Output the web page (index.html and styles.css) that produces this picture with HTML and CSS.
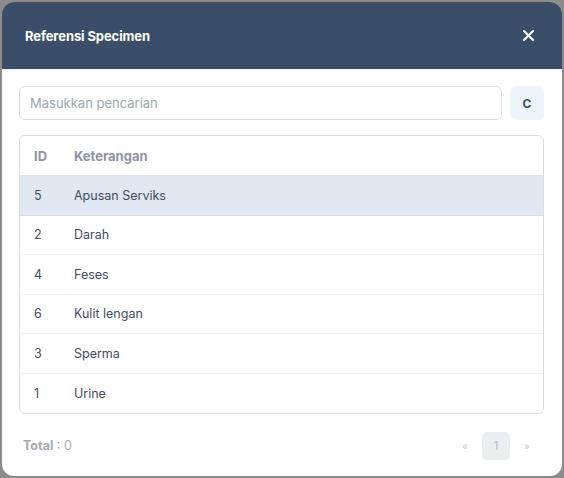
FILE: index.html
```html
<!DOCTYPE html>
<html lang="id">
<head>
<meta charset="utf-8">
<title>Referensi Specimen</title>
<link rel="stylesheet" href="styles.css">
</head>
<body>
<div class="modal">
  <div class="modal-header">
    <h2 class="modal-title">Referensi Specimen</h2>
    <button class="close-btn" aria-label="Tutup">
      <svg width="11" height="11" viewBox="0 0 11 11"><path d="M1 1 L10 10 M10 1 L1 10" stroke="#fff" stroke-width="2" stroke-linecap="round"/></svg>
    </button>
  </div>
  <div class="modal-body">
    <div class="search-row">
      <input class="search-input" type="text" placeholder="Masukkan pencarian">
      <button class="clear-btn">C</button>
    </div>
    <div class="table-wrap">
      <div class="row head"><span class="c-id">ID</span><span class="c-ket">Keterangan</span></div>
      <div class="row active"><span class="c-id">5</span><span class="c-ket">Apusan Serviks</span></div>
      <div class="row"><span class="c-id">2</span><span class="c-ket">Darah</span></div>
      <div class="row"><span class="c-id">4</span><span class="c-ket">Feses</span></div>
      <div class="row"><span class="c-id">6</span><span class="c-ket">Kulit lengan</span></div>
      <div class="row"><span class="c-id">3</span><span class="c-ket">Sperma</span></div>
      <div class="row last"><span class="c-id">1</span><span class="c-ket">Urine</span></div>
    </div>
    <div class="footer">
      <div class="total"><b>Total</b> : 0</div>
      <div class="pager">
        <span class="arrow">«</span>
        <span class="page">1</span>
        <span class="arrow">»</span>
      </div>
    </div>
  </div>
</div>
</body>
</html>
```
FILE: styles.css
```css
* { box-sizing: border-box; }
html, body { margin: 0; padding: 0; }
body {
  background: #8c8c8c;
  font-family: Inter, "Open Sans", sans-serif;
  width: 564px;
  height: 478px;
  padding: 2px;
}
.modal {
  width: 560px;
  height: 474px;
  background: #fff;
  border-radius: 12px;
  overflow: hidden;
}
.modal-header {
  height: 67px;
  background: #3b4e69;
  display: flex;
  align-items: center;
  justify-content: space-between;
  padding: 0 28px 0 23px;
  box-shadow: 0 1px 2px rgba(0,0,0,0.08);
}
.modal-title {
  margin: 0;
  color: #fff;
  font-size: 13px;
  font-weight: 700;
  letter-spacing: -0.1px;
}
.close-btn {
  background: none;
  border: 0;
  padding: 0;
  width: 11px;
  height: 11px;
  display: flex;
  align-items: center;
  justify-content: center;
}
.modal-body {
  padding: 17px 18px 0 17px;
}
.search-row {
  display: flex;
  gap: 8px;
}
.search-input {
  flex: 1;
  height: 34px;
  border: 1px solid #d9dce3;
  border-radius: 6px;
  padding: 0 10px;
  font-family: inherit;
  font-size: 13px;
  color: #3e4a5c;
  outline: none;
}
.search-input::placeholder { color: #9ea6b4; }
.clear-btn {
  width: 34px;
  height: 34px;
  border: 0;
  border-radius: 6px;
  background: #eef4fc;
  color: #3b4e69;
  font-family: inherit;
  font-weight: 700;
  font-size: 12px;
  padding: 0;
}
.table-wrap {
  margin-top: 15px;
  border: 1px solid #dadde4;
  border-radius: 6px;
  overflow: hidden;
}
.row {
  display: flex;
  align-items: center;
  height: 39.5px;
  padding: 0 14px;
  border-bottom: 1px solid #f0f1f4;
  font-size: 12.5px;
  color: #3f4c61;
}
.row.head {
  height: 40px;
  border-bottom: 1px solid #e1e4ea;
  font-size: 13px;
  font-weight: 700;
  color: #8a94a6;
}
.row.active { background: #e2e8f1; border-bottom-color: #d8dfea; }
.row.last { border-bottom: 0; height: 39px; }
.c-id { width: 40px; }
.footer {
  display: flex;
  justify-content: space-between;
  align-items: center;
  margin-top: 18px;
  padding: 0 0 0 4px;
}
.total {
  font-size: 12.5px;
  color: #a3abb8;
}
.total b { font-weight: 700; }
.pager {
  display: flex;
  align-items: center;
}
.arrow {
  width: 34px;
  text-align: center;
  font-size: 10px;
  color: #c6cad2;
}
.page {
  width: 28px;
  height: 28px;
  border-radius: 6px;
  background: #ebedf0;
  color: #b6bbc4;
  font-size: 12px;
  display: flex;
  align-items: center;
  justify-content: center;
}
```
